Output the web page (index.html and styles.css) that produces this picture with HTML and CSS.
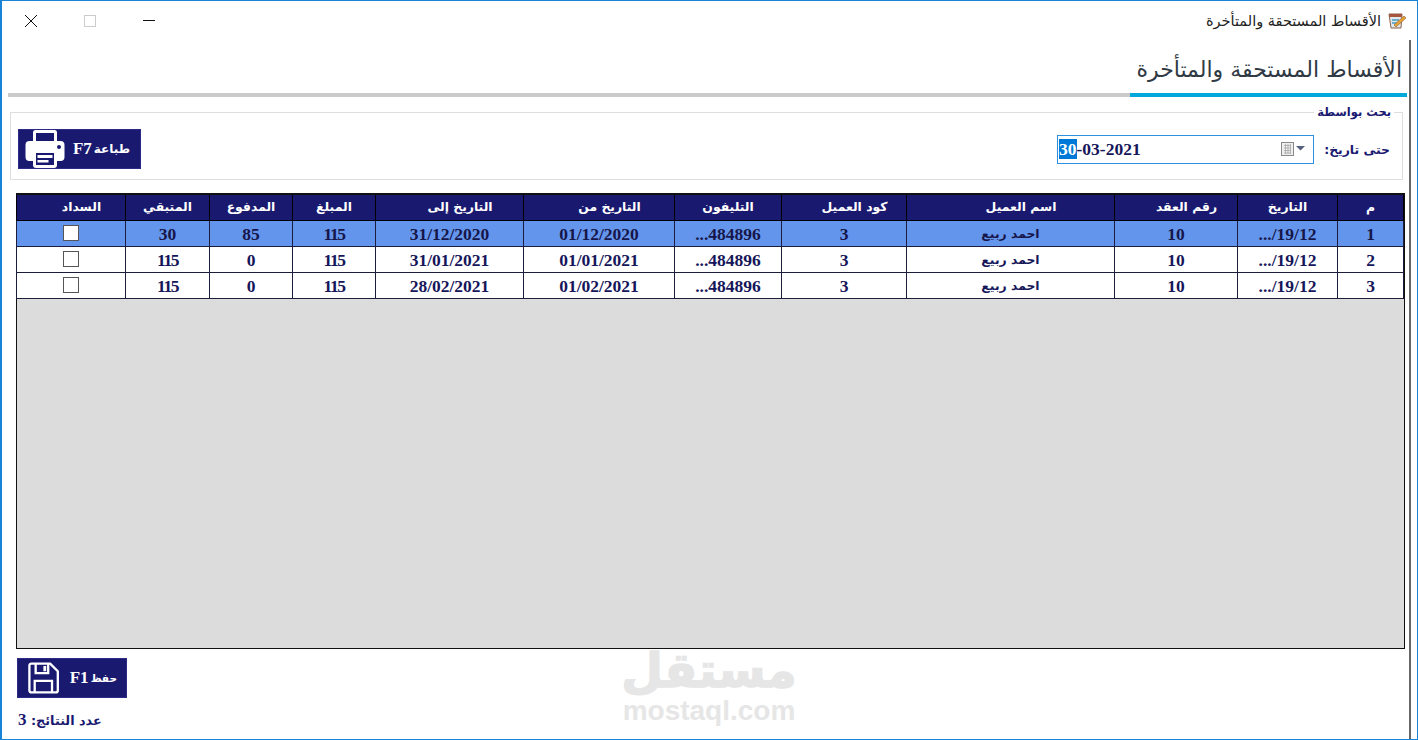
FILE: index.html
```html
<!DOCTYPE html>
<html lang="ar" dir="rtl">
<head>
<meta charset="utf-8">
<title>الأقساط المستحقة والمتأخرة</title>
<link rel="stylesheet" href="styles.css">
</head>
<body>
<div class="window">
  <header class="titlebar">
    <div class="app-title">
      <svg class="app-icon" width="19" height="16" viewBox="0 0 19 16">
        <path d="M1 1h13l-1 14H3z" fill="#dfe9ef" stroke="#8a5f4a"/>
        <path d="M1 1h13l-.3 3H1.300z" fill="#a8553f"/>
        <path d="M4 7h7M4 10h5" stroke="#4a9cc4" stroke-width="1.500"/>
        <path d="M6 12 L16 3 L18 5 L8 14 Z" fill="#e9a33a" stroke="#8a5a1e" stroke-width=".6"/>
      </svg>
      <span>الأقساط المستحقة والمتأخرة</span>
    </div>
    <div class="win-controls">
      <svg class="ctl ctl-min" width="14" height="14" viewBox="0 0 14 14"><path d="M1 6.500h12" stroke="#111" stroke-width="1"/></svg>
      <svg class="ctl ctl-max" width="12" height="12" viewBox="0 0 12 12"><rect x=".5" y=".5" width="11" height="11" fill="none" stroke="#ccc"/></svg>
      <svg class="ctl ctl-close" width="14" height="14" viewBox="0 0 14 14"><path d="M1 1l12 12M13 1L1 13" stroke="#111" stroke-width="1" fill="none"/></svg>
    </div>
  </header>

  <main class="content">
    <div class="page-head">
      <h1 class="page-title">الأقساط المستحقة والمتأخرة</h1>
    </div>
    <div class="tab-line"><span class="tab-active"></span><span class="tab-rest"></span></div>

    <fieldset class="search">
      <legend>بحث بواسطة</legend>
      <div class="search-row">
        <label class="date-label">حتى تاريخ:</label>
        <div class="date-box">
          <span class="date-val"><span class="sel">30</span>-03-2021</span>
          <span class="date-ctl">
            <svg width="26" height="16" viewBox="0 0 26 16">
              <rect x="1.500" y="1.500" width="12" height="13" fill="#eee" stroke="#8a8a8a"/>
              <path d="M4 4.500h7M4 7h7M4 9.500h7M4 12h7M5.500 3v10M8 3v10M10.500 3v10" stroke="#a0a0a0" stroke-width=".7"/>
              <path d="M16 5h9l-4.500 4.500z" fill="#55607f"/>
            </svg>
          </span>
        </div>
        <button class="btn btn-print" type="button">
          <span class="btn-ar">طباعة</span><span class="btn-key">F7</span>
          <svg width="40" height="38" viewBox="0 0 40 38">
            <path fill="#fff" fill-rule="evenodd" d="M8 2.500a2.500 2.500 0 0 1 2.500-2.500h19a2.500 2.500 0 0 1 2.500 2.500V11h3.500a4 4 0 0 1 4 4v12a4 4 0 0 1-4 4H32v4a3 3 0 0 1-3 3H11a3 3 0 0 1-3-3v-4H4.500a4 4 0 0 1-4-4V15a4 4 0 0 1 4-4H8zM11 3v8h18V3zM34 15a2 2 0 1 0 0 4a2 2 0 0 0 0-4zM11 23v12h18V23z"/>
            <path d="M12.500 25h15v3h-15zM12.500 30h11v2.500h-11z" fill="#fff"/>
          </svg>
        </button>
      </div>
    </fieldset>

    <section class="grid-panel">
      <table class="grid">
        <colgroup>
          <col class="c-m"><col class="c-date"><col class="c-contract"><col class="c-name"><col class="c-code"><col class="c-phone"><col class="c-from"><col class="c-to"><col class="c-amt"><col class="c-paid"><col class="c-rem"><col class="c-pay">
        </colgroup>
        <thead>
          <tr><th>م</th><th>التاريخ</th><th class="off">رقم العقد</th><th class="off">اسم العميل</th><th class="off">كود العميل</th><th>التليفون</th><th class="off">التاريخ من</th><th class="off">التاريخ إلى</th><th>المبلغ</th><th>المدفوع</th><th>المتبقي</th><th class="off">السداد</th></tr>
        </thead>
        <tbody>
          <tr class="selected"><td>1</td><td><bdo dir="ltr">.../19/12</bdo></td><td>10</td><td class="ar">احمد ربيع</td><td>3</td><td><bdo dir="ltr">...484896</bdo></td><td>01/12/2020</td><td>31/12/2020</td><td class="k">115</td><td>85</td><td>30</td><td class="chk-cell"><span class="chk"></span></td></tr>
          <tr><td>2</td><td><bdo dir="ltr">.../19/12</bdo></td><td>10</td><td class="ar">احمد ربيع</td><td>3</td><td><bdo dir="ltr">...484896</bdo></td><td>01/01/2021</td><td>31/01/2021</td><td class="k">115</td><td>0</td><td class="k">115</td><td class="chk-cell"><span class="chk"></span></td></tr>
          <tr><td>3</td><td><bdo dir="ltr">.../19/12</bdo></td><td>10</td><td class="ar">احمد ربيع</td><td>3</td><td><bdo dir="ltr">...484896</bdo></td><td>01/02/2021</td><td>28/02/2021</td><td class="k">115</td><td>0</td><td class="k">115</td><td class="chk-cell"><span class="chk"></span></td></tr>
        </tbody>
      </table>
    </section>

    <div class="footer-left">
      <button class="btn btn-save" type="button">
        <span class="btn-ar btn-ar-small">حفظ</span><span class="btn-key">F1</span>
        <svg width="34" height="34" viewBox="0 0 34 34">
          <path fill="none" stroke="#fff" stroke-width="2.400" stroke-linejoin="round" d="M2.500 4a2 2 0 0 1 2-2H24l8 8v20a2 2 0 0 1-2 2H4.500a2 2 0 0 1-2-2z"/>
          <path fill="none" stroke="#fff" stroke-width="2.400" d="M9 2.500v9.500h13V2.500M8 32V20h18v12"/>
          <path fill="#fff" d="M17 4.500h3v5.500h-3z"/>
        </svg>
      </button>
      <div class="count">عدد النتائج: <span class="count-num">3</span></div>
    </div>
  </main>

  <div class="watermark" aria-hidden="true">
    <div class="wm-ar">مستقل</div>
    <div class="wm-en">mostaql.com</div>
  </div>
</div>
</body>
</html>
```
FILE: styles.css
```css
* { box-sizing: border-box; }
html, body { margin: 0; padding: 0; }
body {
  width: 1418px;
  height: 740px;
  overflow: hidden;
  background: #fff;
  font-family: "Liberation Serif", "DejaVu Sans", serif;
  color: #191970;
}
.window {
  position: relative;
  width: 1418px;
  height: 740px;
  border: 1px solid #1883d7;
  border-left-width: 2px;
  background: #fff;
  display: flex;
  flex-direction: column;
}
.titlebar {
  height: 39px;
  flex: none;
  display: flex;
  justify-content: space-between;
  align-items: center;
  padding: 0 10px 0 0;
}
.app-title {
  display: flex;
  align-items: center;
  gap: 7px;
  font-family: "DejaVu Sans", sans-serif;
  font-size: 14.500px;
  color: #222;
}
.win-controls {
  display: flex;
  align-items: center;
  width: 154px;
  height: 100%;
  justify-content: space-between;
  padding-left: 22px;
}
.content {
  flex: 1;
  margin-right: 6px;
  border-right: 2px solid #666;
  padding-right: 2px;
  min-height: 0;
}
.page-head { height: 53px; padding-right: 5px; }
.page-title {
  margin: 0;
  padding-top: 13px;
  font-family: "DejaVu Sans", sans-serif;
  font-size: 22px;
  line-height: 34px;
  font-weight: 400;
  color: #2f3a45;
}
.tab-line { display: flex; height: 4px; margin-left: 6px; }
.tab-active { width: 277px; background: #00a8dc; }
.tab-rest { flex: 1; background: #cbcbcb; }

.search {
  margin: 8px 4px 0 8px;
  padding: 0 12px 0 7px;
  height: 75px;
  border: 1px solid #dedede;
}
.search legend {
  padding: 0 3px;
  margin-right: -4px;
  font: bold 11.500px/15px "DejaVu Sans", sans-serif;
  color: #191970;
}
.search-row {
  display: flex;
  align-items: center;
  height: 58px;
}
.date-label {
  font: bold 12.400px "DejaVu Sans", sans-serif;
  color: #191970;
  width: 76px;
}
.date-box {
  direction: ltr;
  display: flex;
  justify-content: space-between;
  align-items: center;
  width: 257px;
  height: 29px;
  border: 1px solid #2f8fe0;
  padding: 0 7px 0 1px;
  background: #fff;
}
.date-val { font: bold 17.500px "Liberation Serif", serif; color: #16165a; }
.sel { background: #0078d7; color: #fff; }
.date-ctl { display: flex; align-items: center; }
.btn {
  display: flex;
  align-items: center;
  border: 1px solid #2c2c88;
  background: #191970;
  color: #fff;
  height: 40px;
  padding: 0;
  white-space: nowrap;
}
.btn-ar { font: bold 12px "DejaVu Sans", sans-serif; }
.btn-ar-small { font-size: 10.500px; }
.btn-key { font: bold 17px "Liberation Serif", serif; margin-right: 2px; }
.btn-print { width: 123px; margin-right: auto; justify-content: flex-start; padding-right: 10px; padding-left: 5px; }
.btn-print svg { margin-right: 8px; }
.btn-save { width: 110px; justify-content: flex-start; padding-right: 9px; padding-left: 9px; }
.btn-save svg { margin-right: 10px; }

.grid-panel {
  margin: 13px 2px 0 14px;
  height: 456px;
  background: #dcdcdc;
  border: 1px solid #111;
  border-top: 2px solid #111;
}
.grid {
  width: 100%;
  table-layout: fixed;
  border-collapse: collapse;
}
.c-m { width: 66px; }
.c-date { width: 100px; }
.c-contract { width: 123px; }
.c-name { width: 208px; }
.c-code { width: 125px; }
.c-phone { width: 107px; }
.c-from { width: 151px; }
.c-to { width: 148px; }
.c-amt { width: 83px; }
.c-paid { width: 83px; }
.c-rem { width: 84px; }
.c-pay { width: 109px; }
.grid th {
  height: 25px;
  background: #191970;
  color: #fff;
  font: bold 12.400px "DejaVu Sans", sans-serif;
  border-right: 1px solid #000;
  border-left: 1px solid #000;
  border-bottom: 1px solid #000;
  padding: 0 0 2px;
}
.grid th.off { padding-left: 21px; }
.grid td {
  height: 26px;
  background: #fff;
  color: #16165a;
  font: bold 17.500px/20px "Liberation Serif", serif;
  text-align: center;
  border: 1px solid #1c1c3c;
  padding: 2px 0 0;
}
.grid td.k { letter-spacing: -1.500px; }
.grid td.ar { font: bold 12.400px/20px "DejaVu Sans", sans-serif; padding-top: 1px; }
.grid .selected td { background: #6495ed; color: #16164a; }
.grid td.chk-cell { vertical-align: middle; padding: 0; }
.chk {
  display: block;
  width: 16px;
  height: 16px;
  margin: -1px auto 0;
  background: #fff;
  border: 1px solid #555;
}

.footer-left {
  margin: 9px 0 0 0;
  padding-left: 15px;
  display: flex;
  flex-direction: column;
  align-items: flex-end;
}
.count {
  margin-top: 13px;
  font: bold 12.800px/18px "DejaVu Sans", serif;
  color: #191970;
  white-space: nowrap;
  margin-left: 1px;
}
.count-num { font: bold 17px/18px "Liberation Serif", serif; }

.watermark {
  position: absolute;
  left: 618px;
  top: 642px;
  width: 178px;
  direction: ltr;
  text-align: center;
  color: #e6e6e6;
  pointer-events: none;
}
.wm-ar { font: bold 48px/55px "DejaVu Sans", sans-serif; -webkit-text-stroke: 1.500px #e6e6e6; }
.wm-en { font: bold 28px/26px "Liberation Sans", sans-serif; }
```
